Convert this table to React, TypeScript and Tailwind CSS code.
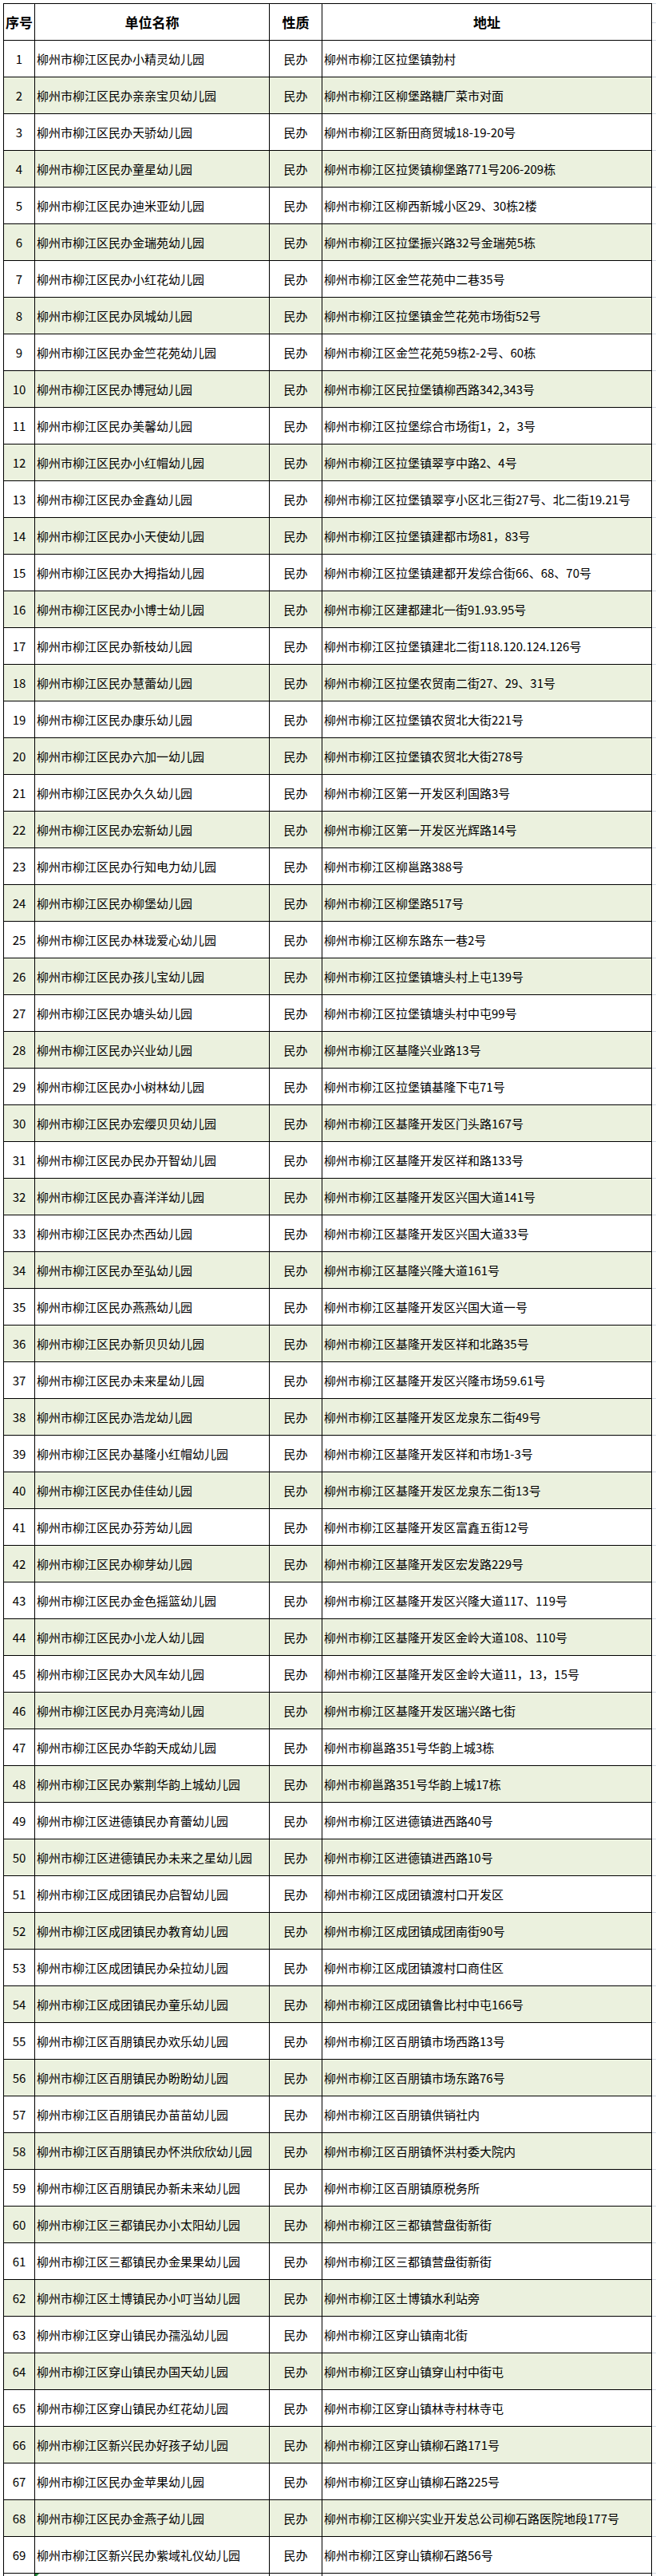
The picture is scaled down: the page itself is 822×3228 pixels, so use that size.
import React from "react";

const rows: [string, string][] = [
  ["柳州市柳江区民办小精灵幼儿园", "柳州市柳江区拉堡镇勃村"],
  ["柳州市柳江区民办亲亲宝贝幼儿园", "柳州市柳江区柳堡路糖厂菜市对面"],
  ["柳州市柳江区民办天骄幼儿园", "柳州市柳江区新田商贸城18-19-20号"],
  ["柳州市柳江区民办童星幼儿园", "柳州市柳江区拉煲镇柳堡路771号206-209栋"],
  ["柳州市柳江区民办迪米亚幼儿园", "柳州市柳江区柳西新城小区29、30栋2楼"],
  ["柳州市柳江区民办金瑞苑幼儿园", "柳州市柳江区拉堡振兴路32号金瑞苑5栋"],
  ["柳州市柳江区民办小红花幼儿园", "柳州市柳江区金竺花苑中二巷35号"],
  ["柳州市柳江区民办凤城幼儿园", "柳州市柳江区拉堡镇金竺花苑市场街52号"],
  ["柳州市柳江区民办金竺花苑幼儿园", "柳州市柳江区金竺花苑59栋2-2号、60栋"],
  ["柳州市柳江区民办博冠幼儿园", "柳州市柳江区民拉堡镇柳西路342,343号"],
  ["柳州市柳江区民办美馨幼儿园", "柳州市柳江区拉堡综合市场街1，2，3号"],
  ["柳州市柳江区民办小红帽幼儿园", "柳州市柳江区拉堡镇翠亨中路2、4号"],
  ["柳州市柳江区民办金鑫幼儿园", "柳州市柳江区拉堡镇翠亨小区北三街27号、北二街19.21号"],
  ["柳州市柳江区民办小天使幼儿园", "柳州市柳江区拉堡镇建都市场81，83号"],
  ["柳州市柳江区民办大拇指幼儿园", "柳州市柳江区拉堡镇建都开发综合街66、68、70号"],
  ["柳州市柳江区民办小博士幼儿园", "柳州市柳江区建都建北一街91.93.95号"],
  ["柳州市柳江区民办新枝幼儿园", "柳州市柳江区拉堡镇建北二街118.120.124.126号"],
  ["柳州市柳江区民办慧蕾幼儿园", "柳州市柳江区拉堡农贸南二街27、29、31号"],
  ["柳州市柳江区民办康乐幼儿园", "柳州市柳江区拉堡镇农贸北大街221号"],
  ["柳州市柳江区民办六加一幼儿园", "柳州市柳江区拉堡镇农贸北大街278号"],
  ["柳州市柳江区民办久久幼儿园", "柳州市柳江区第一开发区利国路3号"],
  ["柳州市柳江区民办宏新幼儿园", "柳州市柳江区第一开发区光辉路14号"],
  ["柳州市柳江区民办行知电力幼儿园", "柳州市柳江区柳邕路388号"],
  ["柳州市柳江区民办柳堡幼儿园", "柳州市柳江区柳堡路517号"],
  ["柳州市柳江区民办林珑爱心幼儿园", "柳州市柳江区柳东路东一巷2号"],
  ["柳州市柳江区民办孩儿宝幼儿园", "柳州市柳江区拉堡镇塘头村上屯139号"],
  ["柳州市柳江区民办塘头幼儿园", "柳州市柳江区拉堡镇塘头村中屯99号"],
  ["柳州市柳江区民办兴业幼儿园", "柳州市柳江区基隆兴业路13号"],
  ["柳州市柳江区民办小树林幼儿园", "柳州市柳江区拉堡镇基隆下屯71号"],
  ["柳州市柳江区民办宏缨贝贝幼儿园", "柳州市柳江区基隆开发区门头路167号"],
  ["柳州市柳江区民办民办开智幼儿园", "柳州市柳江区基隆开发区祥和路133号"],
  ["柳州市柳江区民办喜洋洋幼儿园", "柳州市柳江区基隆开发区兴国大道141号"],
  ["柳州市柳江区民办杰西幼儿园", "柳州市柳江区基隆开发区兴国大道33号"],
  ["柳州市柳江区民办至弘幼儿园", "柳州市柳江区基隆兴隆大道161号"],
  ["柳州市柳江区民办燕燕幼儿园", "柳州市柳江区基隆开发区兴国大道一号"],
  ["柳州市柳江区民办新贝贝幼儿园", "柳州市柳江区基隆开发区祥和北路35号"],
  ["柳州市柳江区民办未来星幼儿园", "柳州市柳江区基隆开发区兴隆市场59.61号"],
  ["柳州市柳江区民办浩龙幼儿园", "柳州市柳江区基隆开发区龙泉东二街49号"],
  ["柳州市柳江区民办基隆小红帽幼儿园", "柳州市柳江区基隆开发区祥和市场1-3号"],
  ["柳州市柳江区民办佳佳幼儿园", "柳州市柳江区基隆开发区龙泉东二街13号"],
  ["柳州市柳江区民办芬芳幼儿园", "柳州市柳江区基隆开发区富鑫五街12号"],
  ["柳州市柳江区民办柳芽幼儿园", "柳州市柳江区基隆开发区宏发路229号"],
  ["柳州市柳江区民办金色摇篮幼儿园", "柳州市柳江区基隆开发区兴隆大道117、119号"],
  ["柳州市柳江区民办小龙人幼儿园", "柳州市柳江区基隆开发区金岭大道108、110号"],
  ["柳州市柳江区民办大风车幼儿园", "柳州市柳江区基隆开发区金岭大道11，13，15号"],
  ["柳州市柳江区民办月亮湾幼儿园", "柳州市柳江区基隆开发区瑞兴路七街"],
  ["柳州市柳江区民办华韵天成幼儿园", "柳州市柳邕路351号华韵上城3栋"],
  ["柳州市柳江区民办紫荆华韵上城幼儿园", "柳州市柳邕路351号华韵上城17栋"],
  ["柳州市柳江区进德镇民办育蕾幼儿园", "柳州市柳江区进德镇进西路40号"],
  ["柳州市柳江区进德镇民办未来之星幼儿园", "柳州市柳江区进德镇进西路10号"],
  ["柳州市柳江区成团镇民办启智幼儿园", "柳州市柳江区成团镇渡村口开发区"],
  ["柳州市柳江区成团镇民办教育幼儿园", "柳州市柳江区成团镇成团南街90号"],
  ["柳州市柳江区成团镇民办朵拉幼儿园", "柳州市柳江区成团镇渡村口商住区"],
  ["柳州市柳江区成团镇民办童乐幼儿园", "柳州市柳江区成团镇鲁比村中屯166号"],
  ["柳州市柳江区百朋镇民办欢乐幼儿园", "柳州市柳江区百朋镇市场西路13号"],
  ["柳州市柳江区百朋镇民办盼盼幼儿园", "柳州市柳江区百朋镇市场东路76号"],
  ["柳州市柳江区百朋镇民办苗苗幼儿园", "柳州市柳江区百朋镇供销社内"],
  ["柳州市柳江区百朋镇民办怀洪欣欣幼儿园", "柳州市柳江区百朋镇怀洪村委大院内"],
  ["柳州市柳江区百朋镇民办新未来幼儿园", "柳州市柳江区百朋镇原税务所"],
  ["柳州市柳江区三都镇民办小太阳幼儿园", "柳州市柳江区三都镇营盘街新街"],
  ["柳州市柳江区三都镇民办金果果幼儿园", "柳州市柳江区三都镇营盘街新街"],
  ["柳州市柳江区土博镇民办小叮当幼儿园", "柳州市柳江区土博镇水利站旁"],
  ["柳州市柳江区穿山镇民办孺泓幼儿园", "柳州市柳江区穿山镇南北街"],
  ["柳州市柳江区穿山镇民办国天幼儿园", "柳州市柳江区穿山镇穿山村中街屯"],
  ["柳州市柳江区穿山镇民办红花幼儿园", "柳州市柳江区穿山镇林寺村林寺屯"],
  ["柳州市柳江区新兴民办好孩子幼儿园", "柳州市柳江区穿山镇柳石路171号"],
  ["柳州市柳江区民办金苹果幼儿园", "柳州市柳江区穿山镇柳石路225号"],
  ["柳州市柳江区民办金燕子幼儿园", "柳州市柳江区柳兴实业开发总公司柳石路医院地段177号"],
  ["柳州市柳江区新兴民办紫域礼仪幼儿园", "柳州市柳江区穿山镇柳石路56号"],
];

const gridCols = "grid grid-cols-[40px_294px_66px_413px_5px]";

export default function App() {
  return (
    <div className="bg-white pt-[4px] pl-[4px] w-[822px] text-black font-['Noto_Sans_CJK_SC','Noto_Sans',sans-serif]">
      {/* header */}
      <div className={`${gridCols} h-[47px] text-[17px] font-bold leading-[20px]`}>
        <div className="flex items-center justify-center border-l border-t border-r border-b border-black whitespace-nowrap">序号</div>
        <div className="flex items-center justify-center border-t border-r border-b border-black">单位名称</div>
        <div className="flex items-center justify-center border-t border-r border-b border-black">性质</div>
        <div className="flex items-center justify-center border-t border-r border-b border-black">地址</div>
        <div className="border-t border-b border-[#cfd6e2]">
          <div className="h-[24px] border-b border-[#cfd6e2]" />
        </div>
      </div>
      {rows.map(([name, addr], i) => {
        const shade = i % 2 === 1 ? "bg-[#ebf1de]" : "bg-white";
        return (
          <div key={i} className={`${gridCols} h-[46px] text-[15px] leading-[20px]`}>
            <div className={`flex items-center justify-center border-l border-r border-b border-black ${shade}`}>{i + 1}</div>
            <div className={`flex items-center pl-[2px] border-r border-b border-black whitespace-nowrap ${shade}`}>{name}</div>
            <div className={`flex items-center justify-center border-r border-b border-black ${shade}`}>民办</div>
            <div className={`flex items-center pl-[2px] border-r border-b border-black whitespace-nowrap ${shade}`}>{addr}</div>
            <div className="border-b border-[#cfd6e2]" />
          </div>
        );
      })}
      {/* partially visible next row */}
      <div className={`${gridCols} h-[3px]`}>
        <div className="border-l border-r border-black" />
        <div className="relative border-r border-black">
          <svg className="absolute left-0 top-0" width="5" height="5" viewBox="0 0 5 5">
            <polygon points="0,0 5,0 0,5" fill="#1f8a3a" />
          </svg>
        </div>
        <div className="border-r border-black" />
        <div className="border-r border-black" />
        <div />
      </div>
    </div>
  );
}
